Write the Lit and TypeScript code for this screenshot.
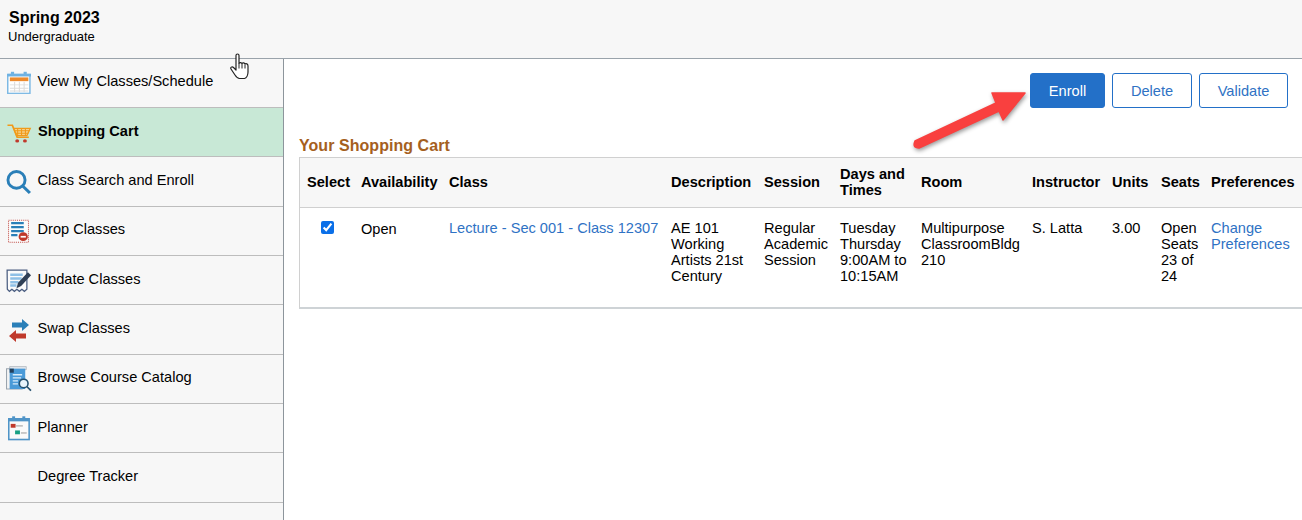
import { LitElement, html, css, svg } from "lit";
import { customElement } from "lit/decorators.js";

const icons: Record<string, unknown> = {
  cal: svg`<rect x="2.500" y="3.500" width="21" height="20" fill="#fff" stroke="#7db9e4" stroke-width="1.400"/><rect x="2" y="2.500" width="22.500" height="3" fill="#6fb2e2"/><rect x="5.500" y="0.500" width="3" height="4" fill="#6fb2e2"/><rect x="17.500" y="0.500" width="3" height="4" fill="#6fb2e2"/><rect x="4.500" y="6.500" width="17.500" height="4" fill="#ee8a2c"/><path d="M4.500 14.500h17.500M4.500 18h17.500M4.500 21h17.500M9 11v11M13.500 11v11M18 11v11" stroke="#dcdcdc" stroke-width="1" fill="none"/>`,
  cart: svg`<path d="M0.500 1.500h5l5 15h12" fill="none" stroke="#f09a1a" stroke-width="1.800"/><path d="M7 5.500h17l-3.500 9h-10.500z" fill="#f5d28e" stroke="#f09a1a" stroke-width="1.400"/><path d="M11 6v8M15 6v8M19 6v8M8 8.500h15M9 11.500h13" stroke="#f09a1a" stroke-width="1.100" fill="none"/><circle cx="10.500" cy="21" r="2" fill="#c0392b"/><circle cx="18.500" cy="21" r="2" fill="#c0392b"/>`,
  search: svg`<circle cx="10.500" cy="10.500" r="8.300" fill="none" stroke="#2a7fb8" stroke-width="2.800"/><path d="M16.500 16.500l7 7" stroke="#2a7fb8" stroke-width="3" fill="none"/>`,
  drop: svg`<rect x="2.500" y="1.500" width="19" height="22" fill="#fbfbfb" stroke="#c2504a" stroke-width="1" stroke-dasharray="1 1"/><path d="M5 4.500h12M5 8.500h12M5 12.500h12M5 16.500h6" stroke="#2a7fb8" stroke-width="2.200" fill="none"/><circle cx="16.500" cy="18" r="4.400" fill="#c0392b"/><rect x="14" y="17.200" width="5" height="1.700" fill="#fff"/>`,
  update: svg`<path d="M1 1.500h19v18l-2.400 2-2.400-2-2.400 2-2.400-2-2.400 2-2.400-2-2.400 2-2-2z" fill="#fbfbfb" stroke="#4a5d80" stroke-width="1.200"/><path d="M4 6h12M4 9.500h11M4 13h8M4 16h6" stroke="#8fc0e6" stroke-width="2.400" fill="none"/><path d="M10 18.500l1.500-5L21 3.500l3 3-9.500 10z" fill="#2f3f55"/>`,
  swap: svg`<path d="M7 7.500h10V4l7 6-7 6v-3.500H7z" fill="#2a7fb8"/><path d="M21 18.500H11V15l-7 6 7 6v-3.500h10z" fill="#c0392b"/>`,
  browse: svg`<path d="M1 3h15v20H1z" fill="#f3f3f3" stroke="#9aa4ae" stroke-width="1"/><path d="M4 1h16v3H4z" fill="#e5e9ee" stroke="#9aa4ae" stroke-width=".6"/><path d="M4 3h15v20H4z" fill="#4a9ad8"/><path d="M4 3h4v4H4z" fill="#24405c"/><path d="M7 9h9M7 12h8M7 15h5M7 18h5" stroke="#d9ecfa" stroke-width="1.300" fill="none"/><circle cx="17.500" cy="17.500" r="4.200" fill="#e8f3fb" stroke="#24506f" stroke-width="1.500"/><path d="M20.500 20.500l4 4" stroke="#24506f" stroke-width="1.600" fill="none"/>`,
  planner: svg`<rect x="2.500" y="3" width="21" height="20.500" fill="#fafafa" stroke="#4f94c7" stroke-width="1.600"/><rect x="2" y="2.500" width="22" height="3" fill="#4f94c7"/><rect x="6" y="0.500" width="3" height="4" fill="#4f94c7"/><rect x="16.500" y="0.500" width="3" height="4" fill="#4f94c7"/><rect x="4.500" y="8" width="5" height="3.800" fill="#c0392b"/><path d="M10 10h7" stroke="#aaa" stroke-width="1.200"/><rect x="9" y="14.500" width="5" height="3.800" fill="#17a083"/><path d="M15 17h6" stroke="#aaa" stroke-width="1.200"/>`,
};

const nav: [string, string, string][] = [
  ["View My Classes/Schedule", "cal", "translate(0.1 3.33) scale(1.057 .936)"],
  ["Shopping Cart", "cart", "translate(2 5.94) scale(.97 .807)"],
  ["Class Search and Enroll", "search", "translate(.7 2.3) scale(1.03 1.01)"],
  ["Drop Classes", "drop", "translate(.9 2.7) scale(1.05 1)"],
  ["Update Classes", "update", "translate(1.08 2.44) scale(1.04 1.065)"],
  ["Swap Classes", "swap", ""],
  ["Browse Course Catalog", "browse", "translate(.48 1.58) scale(1.04 1.02)"],
  ["Planner", "planner", "translate(1.35 1.8) scale(.97 1.01)"],
  ["Degree Tracker", "", ""],
];

const widths = [54, 88, 222, 93, 76, 81, 111, 80, 49, 50, 98];
const heads = ["Select", "Availability", "Class", "Description", "Session", "Days and Times", "Room", "Instructor", "Units", "Seats", "Preferences"];

@customElement("app-root")
export class AppRoot extends LitElement {
  static styles = css`
    :host { display: block; position: relative; width: 1302px; height: 520px; overflow: hidden; background: #fff; color: #000; font-family: "Liberation Sans", Arial, sans-serif; font-size: 14.6px; line-height: 16px; }
    .top { height: 58px; background: #f7f7f7; border-bottom: 1px solid #9aa3ab; padding-left: 8px; display: flex; flex-direction: column; }
    .term { font-weight: 700; font-size: 16px; line-height: 18px; margin: 9px 0 0 1px; }
    .career { font-size: 13px; line-height: 14px; margin-top: 3px; }
    .body { display: flex; height: 461px; }
    .side { width: 283px; flex: none; background: #f7f7f7; border-right: 1px solid #8d959c; }
    .item { height: 49.36px; box-sizing: border-box; border-bottom: 1px solid #bdbdbd; display: flex; align-items: center; padding-left: 5px; gap: 6.5px; padding-bottom: 3px; }
    .item:first-child { margin-top: -0.5px; }
    .item.on { background: #c8e8d6; font-weight: 700; gap: 7px; }
    .item svg, .noicon { width: 26px; height: 26px; flex: none; overflow: visible; }
    .main { flex: 1; min-width: 0; padding: 14px 0 0 15px; }
    .btns { display: flex; justify-content: flex-end; gap: 7px; padding-right: 14px; }
    .btn { height: 35px; box-sizing: border-box; border: 1px solid #2370c8; border-radius: 3px; color: #2f72c4; background: #fff; display: flex; align-items: center; justify-content: center; }
    .btn.primary { background: #2370c8; color: #fff; }
    .w75 { width: 75px; } .w80 { width: 80px; } .w89 { width: 89px; }
    .title { color: #a5601e; font-weight: 700; font-size: 16px; line-height: 18px; margin-top: 29px; letter-spacing: .05px; }
    .tablewrap { width: 1004px; border: 1px solid #d0d0d0; border-bottom: 2px solid #ced3d6; margin-top: 2px; box-sizing: border-box; }
    table { border-collapse: collapse; table-layout: fixed; width: 1002px; }
    th { background: #f7f7f7; height: 49px; text-align: left; padding: 0 0 0 7px; font-weight: 700; border-bottom: 1px solid #d0d0d0; box-sizing: border-box; }
    td { height: 100px; vertical-align: top; padding: 12px 0 0 7px; box-sizing: border-box; }
    td.center { padding: 13px 0 0 21px; }
    input { margin: 0; width: 13px; height: 13px; accent-color: #0a6fe8; display: block; }
    td.avail { padding-top: 13px; }
    a { color: #2f72c4; text-decoration: none; }
    .arrow { position: absolute; left: 905px; top: 80px; width: 135px; height: 80px; pointer-events: none; filter: drop-shadow(1px 2px 2px rgba(0,0,0,.4)); }
    .hand { position: absolute; left: 229px; top: 53px; width: 22px; height: 28px; pointer-events: none; }
  `;

  render() {
    return html`
      <div class="top">
        <div class="term">Spring 2023</div>
        <div class="career">Undergraduate</div>
      </div>
      <div class="body">
        <nav class="side">
          ${nav.map(([label, icon, t]) => html`
            <div class="item ${label === "Shopping Cart" ? "on" : ""}">
              ${icon ? html`<svg viewBox="0 0 26 26"><g transform=${t}>${icons[icon]}</g></svg>` : html`<div class="noicon"></div>`}
              <span>${label}</span>
            </div>`)}
        </nav>
        <main class="main">
          <div class="btns">
            <div class="btn primary w75">Enroll</div>
            <div class="btn w80">Delete</div>
            <div class="btn w89">Validate</div>
          </div>
          <div class="title">Your Shopping Cart</div>
          <div class="tablewrap">
            <table>
              <colgroup>${widths.map((w) => html`<col style="width:${w}px" />`)}</colgroup>
              <thead><tr>${heads.map((h) => html`<th>${h}</th>`)}</tr></thead>
              <tbody>
                <tr>
                  <td class="center"><input type="checkbox" checked /></td>
                  <td class="avail">Open</td>
                  <td><a>Lecture - Sec 001 - Class 12307</a></td>
                  <td>AE 101<br />Working<br />Artists 21st<br />Century</td>
                  <td>Regular<br />Academic<br />Session</td>
                  <td>Tuesday<br />Thursday<br />9:00AM to<br />10:15AM</td>
                  <td>Multipurpose<br />ClassroomBldg<br />210</td>
                  <td>S. Latta</td>
                  <td>3.00</td>
                  <td>Open<br />Seats<br />23 of<br />24</td>
                  <td><a>Change<br />Preferences</a></td>
                </tr>
              </tbody>
            </table>
          </div>
        </main>
      </div>
      <svg class="arrow" viewBox="905 80 135 80">
        <path d="M915 141 L996 103 L992 93 L1025 93 L1003 120 L999 111 L919 148 Q912 148 915 141 Z" fill="#f9403f" stroke="#f9403f" stroke-width="1.500" stroke-linejoin="round"/>
      </svg>
      <svg class="hand" viewBox="0 0 22 28">
        <path d="M7 2.500c0-2 3-2 3 0v8c1-1.500 2.500-1 3 0 .8-1 2.500-.8 3 .5 1-.6 3-.3 3 2v6c0 3-1.500 6-3.500 6.500h-5c-2 0-3.500-2-4.500-3.500L2 16c-1-1.500 1-3 2.500-1.500L7 17z" fill="#fff" stroke="#222" stroke-width="1.200" stroke-linejoin="round"/>
        <path d="M10 10.500v5M13 10.500v5M16 11.500v4" stroke="#222" stroke-width="1" fill="none"/>
      </svg>
    `;
  }
}
